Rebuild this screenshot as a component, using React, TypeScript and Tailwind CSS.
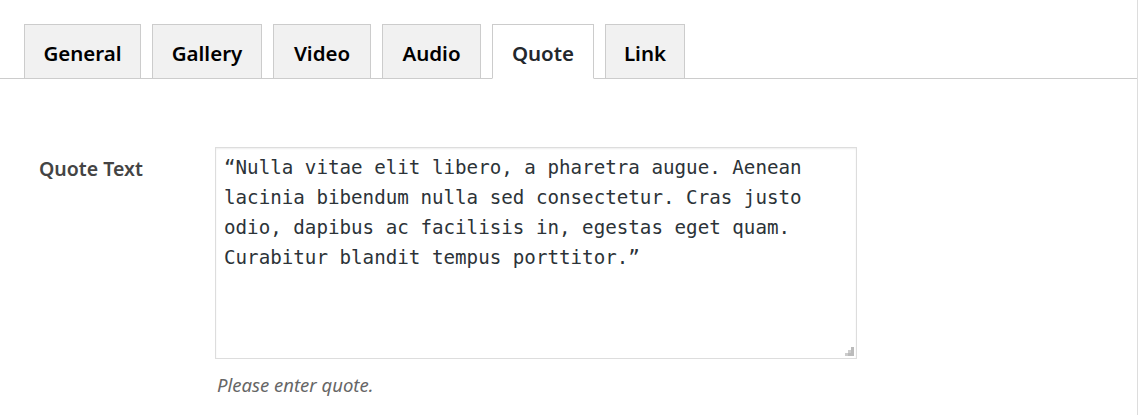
import { useState } from "react";

const tabs = [
  { name: "General", w: "w-[117px]" },
  { name: "Gallery", w: "w-[110px]" },
  { name: "Video", w: "w-[98px]" },
  { name: "Audio", w: "w-[99px]" },
  { name: "Quote", w: "w-[102px]" },
  { name: "Link", w: "w-[80px]" },
];

const quote =
  "\u201CNulla vitae elit libero, a pharetra augue. Aenean lacinia bibendum nulla sed consectetur. Cras justo odio, dapibus ac facilisis in, egestas eget quam. Curabitur blandit tempus porttitor.\u201D";

export default function App() {
  const [active, setActive] = useState("Quote");
  const [text, setText] = useState(quote);

  return (
    <div className="w-full h-[415px] bg-white border-r border-[#ddd] font-['Noto_Sans',sans-serif]">
      <div className="flex gap-[11px] pt-[24px] pl-[24px] border-b border-[#ccc]">
        {tabs.map((t) => (
          <button
            key={t.name}
            onClick={() => setActive(t.name)}
            className={
              t.w +
              " h-[55px] -mb-px pt-[3px] border text-[20.5px] font-semibold leading-none " +
              (t.name === active
                ? "bg-white border-[#ccc] border-b-white text-[#23282d]"
                : "bg-[#f1f1f1] border-[#ccc] text-black")
            }
          >
            {t.name}
          </button>
        ))}
      </div>

      <div className="flex pl-[39px] pt-[68px]">
        <label className="w-[176px] pt-[7px] text-[19.5px] font-semibold text-[#444]">Quote Text</label>
        <div>
          <div className="relative w-[642px] h-[212px]">
            <textarea
              value={text}
              onChange={(e) => setText(e.target.value)}
              className="w-full h-full resize-none border border-[#ddd] shadow-[inset_0_1px_2px_rgba(0,0,0,0.07)] pl-[8px] pr-[40px] pt-[5px] font-['DejaVu_Sans_Mono',monospace] text-[19.2px] leading-[30px] text-[#2c3338] outline-none"
            />
            <svg className="absolute right-[3px] bottom-[3px]" width="9" height="9" viewBox="0 0 9 9">
              <rect x="6" y="0" width="3" height="3" fill="#bbb" />
              <rect x="3" y="3" width="3" height="3" fill="#ccc" />
              <rect x="6" y="3" width="3" height="3" fill="#bbb" />
              <rect x="0" y="6" width="3" height="3" fill="#ccc" />
              <rect x="3" y="6" width="3" height="3" fill="#bbb" />
              <rect x="6" y="6" width="3" height="3" fill="#bbb" />
            </svg>
          </div>
          <p className="mt-[12px] pl-[2px] text-[18.5px] italic text-[#666]">Please enter quote.</p>
        </div>
      </div>
    </div>
  );
}
